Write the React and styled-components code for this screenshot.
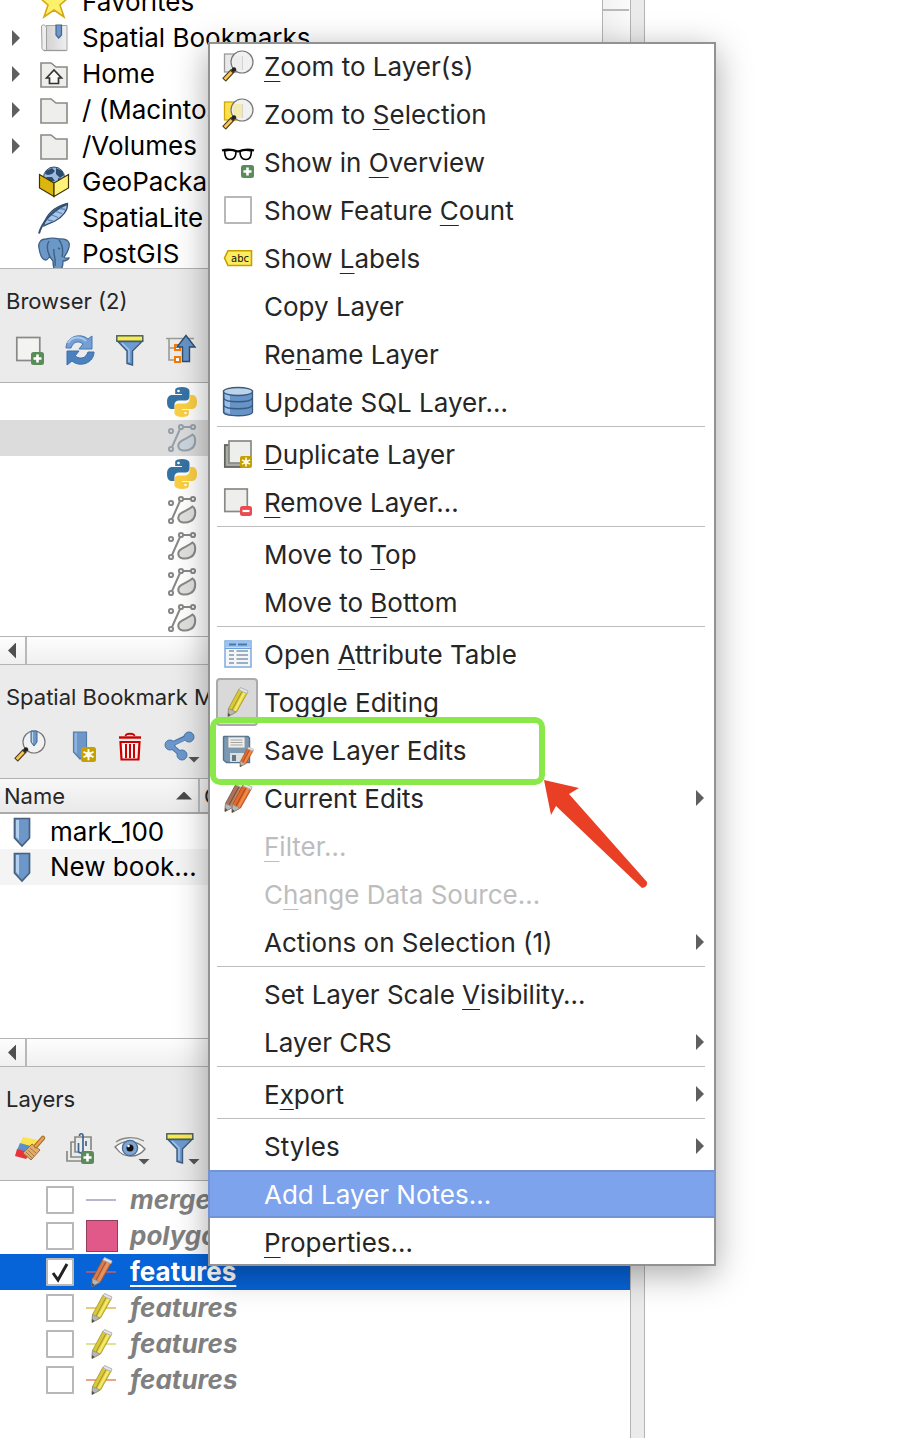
import React from "react";
import styled, { createGlobalStyle, css } from "styled-components";

const GlobalStyle = createGlobalStyle`
  *, *::before, *::after { box-sizing: border-box; }
  body {
    margin: 0;
    background: #ffffff;
    font-family: Inter, "Liberation Sans", sans-serif;
    font-size: 26px;
    line-height: 30px;
    color: #000000;
  }
  button, input, table { font: inherit; color: inherit; }
  ul { list-style: none; margin: 0; padding: 0; }
`;

/* ---------- layout ---------- */

const Window = styled.div`
  position: relative;
  display: flex;
  min-height: 100vh;
  overflow: hidden;
`;

const Dock = styled.aside`
  display: flex;
  flex-direction: column;
  flex: 0 0 631px;
  min-width: 0;
  border-right: 1px solid #b4b4b4;
`;

const Splitter = styled.div`
  flex: 0 0 14px;
  background: #ebebeb;
  border-right: 1px solid #b4b4b4;
`;

const Canvas = styled.main`
  flex: 1;
  background: #ffffff;
`;

/* ---------- browser tree ---------- */

const TreePanel = styled.section`
  display: flex;
  height: 269px;
  border-bottom: 1px solid #b4b4b4;
  overflow: hidden;
`;

const Tree = styled.ul`
  flex: 1;
  margin-top: -16px;
`;

const TreeRow = styled.li`
  display: flex;
  align-items: center;
  height: 36px;
  padding-left: 12px;
  white-space: nowrap;
`;

const Twisty = styled.span`
  width: 8px;
  height: 16px;
  margin-right: 18px;
  background: ${(p) => (p.$shown ? "#5f5f5f" : "transparent")};
  clip-path: polygon(0 0, 100% 50%, 0 100%);
`;

const TreeLabel = styled.span`
  margin-left: 12px;
`;

const VerticalScroll = styled.div`
  width: 28px;
  border-left: 1px solid #b4b4b4;
  background: linear-gradient(90deg, #f2f2f2, #fbfbfb);
`;

const VerticalThumb = styled.div`
  height: 11px;
  margin-right: 1px;
  border-bottom: 2px solid #b8b8b8;
`;

/* ---------- panels ---------- */

const PanelTitle = styled.h2`
  margin: 0;
  padding: 18px 6px 0;
  background: #ebebeb;
  color: #262626;
  font-size: 22px;
  font-weight: 400;
  line-height: 28px;
  white-space: nowrap;
`;

const Toolbar = styled.div`
  display: flex;
  gap: 18px;
  padding: 19px 14px 16px;
  background: #ebebeb;
  border-bottom: 1px solid #b0b0b0;
`;

const ToolButton = styled.button`
  width: 32px;
  height: 32px;
  padding: 0;
  border: 0;
  background: none;
`;

const Svg = styled.svg`
  display: block;
  flex: none;
  overflow: visible;
`;

const ProviderList = styled.ul`
  padding-top: 1px;
`;

const ProviderRow = styled.li`
  display: flex;
  align-items: center;
  height: 36px;
  padding-left: 166px;
  background: ${(p) => (p.$selected ? "#dcdcdc" : "#ffffff")};
`;

const ScrollTrack = styled.div`
  display: flex;
  height: 29px;
  border-top: 1px solid #b4b4b4;
  border-bottom: 1px solid #b4b4b4;
  background: linear-gradient(#fdfdfd, #f0f0f0);
`;

const ScrollButton = styled.button`
  width: 27px;
  padding: 0 0 0 8px;
  border: 0;
  border-right: 2px solid #b8b8b8;
  background: none;

  &::before {
    content: "";
    display: block;
    width: 8px;
    height: 16px;
    background: #4f4f4f;
    clip-path: polygon(100% 0, 0 50%, 100% 100%);
  }
`;

const TableArea = styled.div`
  min-height: 259px;
`;

const BookmarkTable = styled.table`
  width: 100%;
  table-layout: fixed;
  border-collapse: collapse;
  text-align: left;
  white-space: nowrap;
`;

const HeadCell = styled.th`
  width: ${(p) => p.$width || "auto"};
  height: 34px;
  padding: 0 6px 0 4px;
  border-right: 2px solid #bdbdbd;
  border-bottom: 2px solid #ababab;
  background: linear-gradient(#f8f8f8, #e9e9e9);
  color: #262626;
  font-size: 22px;
  font-weight: 400;
`;

const SortLabel = styled.span`
  display: flex;
  align-items: center;
  justify-content: space-between;

  &::after {
    content: "";
    width: 16px;
    height: 8px;
    background: #4a4a4a;
    clip-path: polygon(0 100%, 50% 0, 100% 100%);
  }
`;

const BookmarkRow = styled.tr`
  background: ${(p) => (p.$alt ? "#f4f4f4" : "#ffffff")};
`;

const BookmarkCell = styled.td`
  height: 36px;
  padding: 0;
`;

const BookmarkName = styled.span`
  display: flex;
  align-items: center;
  gap: 12px;
  padding-left: 6px;
`;

/* ---------- layers ---------- */

const LayerList = styled.ul`
  flex: 1;
  padding-top: 1px;
`;

const LayerRow = styled.li`
  background: ${(p) => (p.$selected ? "#0763d8" : "#ffffff")};
  color: ${(p) => (p.$selected ? "#ffffff" : "#808080")};
`;

const LayerLabel = styled.label`
  display: flex;
  align-items: center;
  gap: 12px;
  height: 36px;
  padding-left: 46px;
`;

const Check = styled.input`
  appearance: none;
  flex: none;
  width: 28px;
  height: 28px;
  margin: 0;
  border: 2px solid #b8b8b8;
  border-radius: 1px;
  background: #ffffff;

  &:checked {
    background: #ffffff
      url("data:image/svg+xml,%3Csvg xmlns='http://www.w3.org/2000/svg' viewBox='0 0 24 24'%3E%3Cpath d='M5 13 L10 20 L19 4' fill='none' stroke='%23222' stroke-width='3'/%3E%3C/svg%3E");
  }
`;

const LayerName = styled.span`
  font-weight: 700;
  font-style: ${(p) => (p.$selected ? "normal" : "italic")};
  ${(p) =>
    p.$selected &&
    css`
      text-decoration: underline;
      text-decoration-thickness: 2px;
      text-underline-offset: 4px;
    `}
`;

/* ---------- context menu ---------- */

const Menu = styled.ul`
  position: absolute;
  top: 42px;
  left: 208px;
  width: 508px;
  background: #ffffff;
  color: #262626;
  box-shadow: 0 8px 32px rgba(0, 0, 0, 0.34);

  &::after {
    content: "";
    position: absolute;
    inset: 0;
    border: 2px solid #929292;
    pointer-events: none;
  }
`;

const MenuEntry = styled.li`
  position: relative;
  z-index: ${(p) => (p.$raised ? 1 : "auto")};
`;

const entryStyle = css`
  display: flex;
  align-items: center;
  gap: 6px;
  width: 100%;
  height: 48px;
  padding: 0 12px 0 8px;
  border: 0;
  background: none;
  text-align: left;
  white-space: nowrap;
`;

const MenuButton = styled.button`
  ${entryStyle}
  &:disabled {
    color: #bdbdbd;
  }
  ${(p) =>
    p.$active &&
    css`
      padding: 0 10px 0 6px;
      border: 2px solid #7393d3;
      background: #7ca3ec;
      color: #ffffff;
    `}
`;

const MenuCheckLabel = styled.label`
  ${entryStyle}
`;

const IconSlot = styled.span`
  display: flex;
  align-items: center;
  justify-content: center;
  flex: none;
  width: 42px;
  height: 48px;
  padding-left: 2px;
  ${(p) =>
    p.$pressed &&
    css`
      border: 2px solid #aaaaaa;
      border-radius: 4px;
      background: #d9d9d9;
    `}
`;

const MenuText = styled.span`
  flex: 1;
  padding-top: 2px;
`;

const Mnemonic = styled.span`
  text-decoration: underline;
  text-decoration-thickness: 1px;
  text-underline-offset: 5px;
  text-decoration-skip-ink: none;
`;

const SubmenuArrow = styled.span`
  width: 8px;
  height: 16px;
  background: #5f5f5f;
  clip-path: polygon(0 0, 100% 50%, 0 100%);
`;

const Separator = styled.li`
  height: 4px;
  margin: 0 11px 0 9px;
  border-top: 1px solid #bdbdbd;
`;

const Callout = styled.div`
  position: absolute;
  top: -9px;
  left: 2px;
  width: 335px;
  height: 68px;
  border: 6px solid #8be84b;
  border-radius: 10px;
  pointer-events: none;
`;

const CalloutArrow = styled.svg`
  position: absolute;
  top: 54px;
  left: 335px;
  pointer-events: none;
`;

/* ---------- icons ---------- */

const Icon = ({ children }) => (
  <Svg width="32" height="32" viewBox="0 0 32 32" aria-hidden="true">
    {children}
  </Svg>
);

const PlusBadge = ({ x, y }) => (
  <g transform={`translate(${x} ${y})`}>
    <rect width="13" height="13" rx="2.5" fill="#5a8c5a" />
    <path d="M6.5 2.5V10.5M2.5 6.5H10.5" stroke="#fff" strokeWidth="2.6" />
  </g>
);

const StarBadge = ({ x, y, s = 12 }) => (
  <g transform={`translate(${x} ${y}) scale(${s / 12})`}>
    <rect width="12" height="12" rx="2" fill="#c4a000" />
    <path d="M6 1.5V10.5M2 3.8L10 8.2M10 3.8L2 8.2" stroke="#fff" strokeWidth="1.5" />
    <circle cx="6" cy="6" r="2.2" fill="#fffbe0" />
  </g>
);

const DropMark = () => <path d="M24.500 27H35.500L30 32.500Z" fill="#555" />;

const StarIcon = () => (
  <Icon>
    <path d="M16 2L20 12H30L22 19L26 31L16 24L6 31L10 19L2 12H12Z" fill="#fdf06b" stroke="#d4a814" strokeWidth="1.6" />
  </Icon>
);

const BookIcon = () => (
  <Icon>
    <defs>
      <linearGradient id="page" x1="0" x2="1">
        <stop offset="0" stopColor="#d2d2d2" />
        <stop offset="1" stopColor="#efefef" />
      </linearGradient>
    </defs>
    <path d="M8 3.500H29V28.500H8Z" fill="url(#page)" stroke="#a5a5a5" />
    <path d="M3.500 4C5 2 8 3 8.500 6V26C9 28 8 29 6 28.500C4 28 3.500 26 4 24Z" fill="#eee" stroke="#a0a0a0" />
    <path d="M6 28.500H28" stroke="#999" strokeWidth="1.300" />
    <path d="M18 3H23.500V13L20.700 16L18 13Z" fill="#6d97c9" stroke="#44668f" strokeWidth="1.200" />
  </Icon>
);

const FolderIcon = ({ home }) => (
  <Icon>
    <path d="M3 5H13L18 9H29V29H3Z" fill="#eeeeec" stroke="#888a85" strokeWidth="1.600" />
    {home && (
      <path
        d="M8.500 20L16 12L23.500 20H20.500V25.500H11.500V20Z"
        fill="#f8f8f8"
        stroke="#333"
        strokeWidth="1.700"
      />
    )}
  </Icon>
);

const GeoPackageIcon = () => (
  <Icon>
    <circle cx="16" cy="11.500" r="10.500" fill="#9dbbe0" stroke="#2f4a68" />
    <path d="M8 5L14 2L17 5L14 8L10 9L7 8ZM18 2L24 5L26 9L22 12L18 8ZM8 11L14 11L17 15L12 16ZM20 12L24 13L20 15Z" fill="#2b4b6f" />
    <path d="M1.500 8.500L16 17V30.500L1.500 22Z" fill="#dcb50e" stroke="#3d3200" strokeWidth="1.200" />
    <path d="M30.500 8.500L16 17V30.500L30.500 22Z" fill="#fff278" stroke="#3d3200" strokeWidth="1.200" />
  </Icon>
);

const FeatherIcon = () => (
  <Icon>
    <path d="M6 22C8 14 15 5 29.500 1.500C30 8 25 15 17 19C13 21 9 22 6 24Z" fill="#a9c6ea" stroke="#33506f" strokeWidth="1.300" />
    <path d="M1 31.500C4 21 13 9 29 2" fill="none" stroke="#33506f" strokeWidth="2" />
    <path d="M10 18L15 19M14 13L20 15.500M18 9.500L24 11.500M22 6.500L27 7.500" stroke="#5d86b7" strokeWidth="1.300" />
  </Icon>
);

const ElephantIcon = () => (
  <Icon>
    <path
      d="M8 1C2 1 0 6 1 10C2 17 4 22 8 22C10 22 10 19 12 19L15 23C15 28 16 32 18 32H21C24 32 25 28 25 23C28 23 31 21 31 20C29 20 27 21 26 19C30 14 32 8 31 5C29 0 23 1 21 1C17 0 12 0 8 1Z"
      fill="#6c98c8"
      stroke="#3d6184"
      strokeWidth="1.300"
    />
    <path d="M11 3C8 8 10 15 12 19M21 2C25 7 25 14 24 19M16 11C15 16 18 19 17 28M20 10L22 11" fill="none" stroke="#3d6184" strokeWidth="1.400" />
  </Icon>
);

const AddLayerIcon = () => (
  <Icon>
    <rect x="2.800" y="3.500" width="23" height="23" fill="#f3f3f1" stroke="#888a85" strokeWidth="1.700" />
    <PlusBadge x={17} y={18} />
  </Icon>
);

const RefreshIcon = () => (
  <Icon>
    <path d="M2 14C2 3 16 -2 24 5L28 2V15H15L19 10C14 6 9 8 7 14Z" fill="#739fd2" stroke="#4779b3" strokeWidth="1" />
    <path d="M4 9C8 2 17 2 22 7" fill="none" stroke="#abc8ea" strokeWidth="2" />
    <path d="M30 18C30 29 16 34 8 27L3 31V17H15L11 22C17 26 22 24 24 18Z" fill="#4c81c0" stroke="#3a6eaa" strokeWidth="1" />
  </Icon>
);

const FunnelIcon = ({ drop }) => (
  <Icon>
    <path d="M4 7.500L13 17V29.500L18.500 31V17L28 7.500Z" fill="#6d9bd0" stroke="#3c5d80" strokeWidth="1.400" />
    <path d="M8 9L15 16V28" fill="none" stroke="#a5c6ea" strokeWidth="1.500" />
    <rect x="2.800" y="1.800" width="26" height="5.400" fill="#fce94f" stroke="#3c5d5d" strokeWidth="1.400" />
    {drop && <DropMark />}
  </Icon>
);

const CollapseIcon = () => (
  <Icon>
    <path d="M2 4.500H30M5 5V26H12M5 14H12" fill="none" stroke="#9a9c98" strokeWidth="1.600" />
    <rect x="11" y="11" width="5" height="5" fill="#fff" stroke="#f57900" strokeWidth="2" />
    <rect x="11" y="23" width="5" height="5" fill="#fff" stroke="#f57900" strokeWidth="2" />
    <path d="M22 1.500L31 13H25.500V27.500H18.500V13H13Z" fill="#6795ca" stroke="#2f4e70" strokeWidth="1.400" />
  </Icon>
);

const Snake = ({ fill }) => (
  <>
    <path
      d="M15.800 1C9 1 9.200 4 9.200 4V8H16V9H6S1 8.500 1 16S5.500 23 5.500 23H8.500V19S8.300 14.500 13 14.500H19.500S23.500 14.600 23.500 10.500V5.500S24.200 1 15.800 1Z"
      fill={fill}
    />
    <circle cx="12.500" cy="5" r="1.300" fill="#fff" />
  </>
);

const PythonIcon = () => (
  <Icon>
    <Snake fill="#3673a5" />
    <g transform="rotate(180 16 16)">
      <Snake fill="#fbd043" />
    </g>
  </Icon>
);

const GeometryIcon = ({ tinted }) => {
  const line = tinted ? "#96a1ab" : "#888a87";
  return (
    <Icon>
      <g fill="none" stroke={line} strokeWidth="2">
        <path d="M6 25L14 7M17 5H25" />
        <circle cx="5" cy="9" r="2.100" />
        <circle cx="15" cy="5" r="2.100" />
        <circle cx="27" cy="5" r="2.100" />
        <circle cx="5" cy="27" r="2.100" />
      </g>
      <path
        d="M26.500 12.500C29 14 29.500 18 29 21C28 27 22 29 17 28.500C12 28 11 23 14 20C17 17.500 22 16 26.500 12.500Z"
        fill={tinted ? "#cdd6e0" : "#e1e1df"}
        stroke={line}
        strokeWidth="2"
      />
    </Icon>
  );
};

const Lens = ({ children }) => (
  <>
    <circle cx="20" cy="12" r="11" fill="#f1f1f1" stroke="#777" strokeWidth="1.200" />
    {children}
    <path d="M2 30L11 20.500" stroke="#4b3a1a" strokeWidth="5" />
    <path d="M2.700 29.200L9.500 22" stroke="#f6c65b" strokeWidth="2.800" />
    <circle cx="12" cy="19.500" r="2.200" fill="#222" />
  </>
);

const ZoomBookmarkIcon = () => (
  <Icon>
    <Lens>
      <path d="M17 1H23V12L20 16L17 12Z" fill="#6d97c9" stroke="#44668f" />
      <path d="M18.500 2V13" stroke="#b9d2ee" strokeWidth="1.200" />
    </Lens>
  </Icon>
);

const ZoomLayerIcon = ({ color, stroke }) => (
  <Icon>
    <rect x="2.500" y="4" width="18" height="18" fill={color} stroke={stroke} strokeWidth="1.300" />
    <Lens>
      <path d="M13 6H20.500V20H14C10 16 10 9 13 6Z" fill={color} opacity="0.400" />
      <path d="M20.500 6V20" stroke="#d4d4cc" />
    </Lens>
  </Icon>
);

const AddBookmarkIcon = () => (
  <Icon>
    <path d="M9.500 2H22.500V22L16 29L9.500 22Z" fill="#6d97c9" stroke="#557ba7" strokeWidth="1.200" />
    <path d="M10.500 3H13V24L10.500 21.500Z" fill="#90b4de" />
    <StarBadge x={17} y={17} s={15} />
  </Icon>
);

const TrashIcon = () => (
  <Icon>
    <path d="M5 7.500H27" stroke="#cc0000" strokeWidth="2.400" />
    <path d="M11.500 6C12 3 20 3 20.500 6" fill="none" stroke="#cc0000" strokeWidth="1.800" />
    <path d="M6.500 12H25.500L24.500 29.500H7.500Z" fill="#fff3f3" stroke="#cc0000" strokeWidth="2.200" />
    <path d="M12 14V28M16 14V28M20 14V28" stroke="#cc0000" strokeWidth="2" />
  </Icon>
);

const ShareIcon = () => (
  <Icon>
    <path d="M25 6L6 15L18 25" fill="none" stroke="#4a76ab" strokeWidth="5" />
    <g fill="#6c98cc" stroke="#4a76ab">
      <circle cx="25" cy="7" r="5" />
      <circle cx="6" cy="15" r="5" />
      <circle cx="18" cy="25" r="5" />
    </g>
    <path d="M25 7L6 15L18 25" fill="none" stroke="#6c98cc" strokeWidth="3.400" />
    <DropMark />
  </Icon>
);

const BookmarkIcon = () => (
  <Icon>
    <path d="M8.500 2.500H23.500V22L16 30L8.500 22Z" fill="#6d97c9" stroke="#46617f" strokeWidth="1.700" />
    <path d="M10 4H13V24L10 21Z" fill="#b3d0f0" />
  </Icon>
);

const BrushIcon = () => (
  <Icon>
    <path d="M9 5L24 8L20 17L6 12Z" fill="#fbe34c" />
    <path d="M6 11L20 15L16 22L3 18Z" fill="#5f8fc8" />
    <path d="M3 17L17 21L12 27L1 24Z" fill="#e8333a" />
    <path d="M18 12L9 21L17 28L26 18Z" fill="#e3ad6e" stroke="#a06d2f" />
    <path d="M12 20L18 26M14 18L20 24M16 16L22 21" stroke="#a9783c" strokeWidth="1" />
    <path d="M22 14L29 6" stroke="#a06d2f" strokeWidth="4.500" strokeLinecap="round" />
    <path d="M22 14L29 6" stroke="#e8a04a" strokeWidth="2.600" strokeLinecap="round" />
  </Icon>
);

const AddGroupIcon = () => (
  <Icon>
    <g fill="none" stroke="#888a85" strokeWidth="1.700">
      <path d="M3 19V29H17" />
      <path d="M11 10H7V25H19" />
      <path d="M15 20H11V5H27V18" />
    </g>
    <path d="M14.500 11V19C14.500 21.500 19 21.500 19 19V4C19 1 15.500 1 15.500 4M22 9V14" fill="none" stroke="#40648e" strokeWidth="1.700" />
    <PlusBadge x={17} y={19} />
  </Icon>
);

const EyeIcon = () => (
  <Icon>
    <path d="M2 10C9 5 20 4 30 9" fill="none" stroke="#888a85" strokeWidth="1.300" />
    <path d="M1 15C8 8 23 7 31 17C23 27 9 26 3 17Z" fill="#fafafa" stroke="#777" strokeWidth="1.300" />
    <circle cx="16" cy="16" r="7.600" fill="#7fa5d3" stroke="#456b98" strokeWidth="1.300" />
    <circle cx="16" cy="16" r="3.500" fill="#111" />
    <circle cx="14.500" cy="14" r="1.300" fill="#fff" />
    <DropMark />
  </Icon>
);

const Pencil = ({ fill, light, dark }) => (
  <>
    <path d="M6.500 22.500L17 3L25.500 6.500L14.500 26L6 30.500Z" fill={fill} stroke={dark} strokeWidth="0.800" />
    <path d="M10 24L20 5.500" stroke={dark} strokeWidth="1" />
    <path d="M12.500 25L22.500 6.500" stroke={light} strokeWidth="2.600" />
    <path d="M6.500 22.500L14 26L6 30.500Z" fill="#b7b7b5" stroke="#8d8d8b" strokeWidth="0.800" />
    <path d="M6.300 27L8.500 29L6 30.500Z" fill="#444" />
    <path d="M17 4L18.500 1.500L26 5L25 7.500Z" fill="#e6e6e6" stroke="#b2b2b2" />
  </>
);

const yellow = { fill: "#d8c73a", light: "#f5e96c", dark: "#a39426" };
const orange = { fill: "#e06a2b", light: "#f08a4b", dark: "#a74516" };
const brown = { fill: "#a9745a", light: "#c38e72", dark: "#7a4a35" };
const copper = { fill: "#d77b4c", light: "#e6935f", dark: "#9c5230" };

const LayerPencilIcon = ({ line, tone }) => (
  <Icon>
    <path d="M0 16H30" stroke={line} strokeWidth="1.800" />
    <Pencil {...tone} />
  </Icon>
);

const LineSwatch = () => (
  <Icon>
    <path d="M0 16H30" stroke="#b3aecb" strokeWidth="1.800" />
  </Icon>
);

const PolygonSwatch = () => (
  <Icon>
    <rect x="0.500" y="0.500" width="31" height="31" fill="#e15989" stroke="#8f3f5b" />
  </Icon>
);

const GlassesIcon = () => (
  <Icon>
    <g transform="translate(0 1)">
      <path d="M0 3.500C5 1.800 11 2.500 16 4.500C21 2.500 27 1.800 32 3.500" fill="none" stroke="#000" strokeWidth="2" />
      <path d="M2.500 4C6 3 11 3 14 4.500C14 10 12 12.500 8 12.500C4 12.500 3 10 2.500 4Z" fill="#fff" stroke="#000" strokeWidth="1.700" />
      <path d="M29.500 4C26 3 21 3 18 4.500C18 10 20 12.500 24 12.500C28 12.500 29 10 29.500 4Z" fill="#fff" stroke="#000" strokeWidth="1.700" />
    </g>
    <PlusBadge x={19} y={19} />
  </Icon>
);

const LabelIcon = () => (
  <Icon>
    <path d="M2.500 16L6 8.700H29.500V23.500H6Z" fill="#fcec5e" stroke="#c4a000" strokeWidth="1.600" />
    <text x="9" y="20" fontFamily="DejaVu Sans, sans-serif" fontSize="10" fill="#111">
      abc
    </text>
  </Icon>
);

const DatabaseIcon = () => (
  <Icon>
    <path d="M1.500 5V26C1.500 31 30.500 31 30.500 26V5Z" fill="#6693c8" stroke="#3b5a7c" strokeWidth="1.300" />
    <path d="M3 8V26L8 28V9Z" fill="#9dbfe6" />
    <ellipse cx="16" cy="5.500" rx="14.500" ry="4" fill="#bdd3ea" stroke="#3b5a7c" strokeWidth="1.300" />
    <path d="M1.500 12C3 17 29 17 30.500 12M1.500 19C3 24 29 24 30.500 19" fill="none" stroke="#3b5a7c" strokeWidth="1.300" />
  </Icon>
);

const DuplicateIcon = () => (
  <Icon>
    <rect x="2.800" y="7" width="19" height="22" fill="#a9aba6" stroke="#5e605c" strokeWidth="1.700" />
    <rect x="7" y="3" width="22" height="22" fill="#eeeeec" stroke="#888a85" strokeWidth="1.700" />
    <StarBadge x={18} y={18} />
  </Icon>
);

const RemoveIcon = () => (
  <Icon>
    <rect x="2.800" y="3" width="22.500" height="22.500" fill="#eeeeec" stroke="#888a85" strokeWidth="1.700" />
    <rect x="18" y="20" width="12" height="10" rx="2.500" fill="#ea4b51" />
    <path d="M20.500 25H27.500" stroke="#fff" strokeWidth="2.200" />
  </Icon>
);

const TableIcon = () => (
  <Icon>
    <rect x="3" y="3" width="26" height="26" fill="#f3f5f7" stroke="#84b1e2" strokeWidth="1.600" />
    <rect x="3.500" y="3.500" width="25" height="6" fill="#9cc3ee" />
    <path d="M7 6.500H14M16 6.500H25" stroke="#4a78ad" strokeWidth="2" />
    <path d="M7 13H12M14.500 13H26M7 17H12M14.500 17H26M7 21H12M14.500 21H26M7 25H12M14.500 25H26" stroke="#8296ad" strokeWidth="1.500" />
    <path d="M3 10.500H29" stroke="#6c9fd6" />
  </Icon>
);

const PencilIcon = () => (
  <Icon>
    <Pencil {...yellow} />
  </Icon>
);

const SaveIcon = () => (
  <Icon>
    <path d="M2 2.500H26L27.500 4V28.500H4.500L1.500 26V3Z" fill="#7c99b3" stroke="#56718b" strokeWidth="1.400" />
    <rect x="6" y="3" width="17" height="11" fill="#eeeeec" stroke="#8a8f93" strokeWidth="0.800" />
    <path d="M8.500 6H20.500M8.500 8.500H20.500M8.500 11H20.500" stroke="#a2a4a0" strokeWidth="1.100" />
    <rect x="8" y="19" width="14" height="9" fill="#dedfdd" />
    <rect x="10" y="21" width="4" height="6" fill="#5d7891" />
    <g transform="translate(14 12) scale(0.680)">
      <Pencil {...orange} />
    </g>
  </Icon>
);

const CurrentEditsIcon = () => (
  <Icon>
    <g transform="translate(-3 -1)">
      <Pencil {...brown} />
    </g>
    <g transform="translate(4 0)">
      <Pencil {...orange} />
    </g>
  </Icon>
);

/* ---------- data ---------- */

const treeItems = [
  { label: "Favorites", icon: <StarIcon /> },
  { label: "Spatial Bookmarks", icon: <BookIcon />, open: true },
  { label: "Home", icon: <FolderIcon home />, open: true },
  { label: "/ (Macintosh", icon: <FolderIcon />, open: true },
  { label: "/Volumes", icon: <FolderIcon />, open: true },
  { label: "GeoPackage", icon: <GeoPackageIcon /> },
  { label: "SpatiaLite", icon: <FeatherIcon /> },
  { label: "PostGIS", icon: <ElephantIcon /> },
];

const layers = [
  { name: "merged", icon: <LineSwatch /> },
  { name: "polygon", icon: <PolygonSwatch /> },
  { name: "features", icon: <LayerPencilIcon line="#a2607f" tone={copper} />, selected: true },
  { name: "features", icon: <LayerPencilIcon line="#eac26e" tone={yellow} /> },
  { name: "features", icon: <LayerPencilIcon line="#dbe08a" tone={yellow} /> },
  { name: "features", icon: <LayerPencilIcon line="#e89a7c" tone={yellow} /> },
];

/* An underscore precedes the keyboard mnemonic of each label. */
const menuItems = [
  { label: "_Zoom to Layer(s)", icon: <ZoomLayerIcon color="#e9e9e9" stroke="#9a9a9a" /> },
  { label: "Zoom to _Selection", icon: <ZoomLayerIcon color="#fbe14a" stroke="#cfa90f" /> },
  { label: "Show in _Overview", icon: <GlassesIcon /> },
  { label: "Show Feature _Count", checkbox: true },
  { label: "Show _Labels", icon: <LabelIcon /> },
  { label: "Copy Layer" },
  { label: "Re_name Layer" },
  { label: "Update SQL Layer…", icon: <DatabaseIcon /> },
  null,
  { label: "_Duplicate Layer", icon: <DuplicateIcon /> },
  { label: "_Remove Layer…", icon: <RemoveIcon /> },
  null,
  { label: "Move to _Top" },
  { label: "Move to _Bottom" },
  null,
  { label: "Open _Attribute Table", icon: <TableIcon /> },
  { label: "Toggle _Editing", icon: <PencilIcon />, pressed: true },
  { label: "Save Layer Edits", icon: <SaveIcon />, callout: true },
  { label: "Current Edits", icon: <CurrentEditsIcon />, submenu: true },
  { label: "_Filter…", disabled: true },
  { label: "C_hange Data Source…", disabled: true },
  { label: "Actions on Selection (1)", submenu: true },
  null,
  { label: "Set Layer Scale _Visibility…" },
  { label: "Layer CRS", submenu: true },
  null,
  { label: "E_xport", submenu: true },
  null,
  { label: "Styles", submenu: true },
  { label: "Add Layer Notes…", active: true },
  { label: "_Properties…" },
];

const Label = ({ text }) => {
  const at = text.indexOf("_");
  if (at < 0) return <MenuText>{text}</MenuText>;
  return (
    <MenuText>
      {text.slice(0, at)}
      <Mnemonic>{text[at + 1]}</Mnemonic>
      {text.slice(at + 2)}
    </MenuText>
  );
};

const MenuItem = ({ item }) => (
  <MenuEntry $raised={item.active || item.callout}>
    {item.checkbox ? (
      <MenuCheckLabel>
        <IconSlot>
          <Check type="checkbox" />
        </IconSlot>
        <Label text={item.label} />
      </MenuCheckLabel>
    ) : (
      <MenuButton type="button" disabled={item.disabled} $active={item.active} aria-pressed={item.pressed}>
        <IconSlot $pressed={item.pressed}>{item.icon}</IconSlot>
        <Label text={item.label} />
        {item.submenu && <SubmenuArrow />}
      </MenuButton>
    )}
    {item.callout && (
      <>
        <Callout />
        <CalloutArrow width="106" height="110" viewBox="0 0 106 110" aria-hidden="true">
          <path d="M1 0L36 8L26 14L104 102Q105 107 99 108L13 26L8 35Z" fill="#e94025" />
        </CalloutArrow>
      </>
    )}
  </MenuEntry>
);

const PanelHead = ({ title, tools }) => (
  <>
    <PanelTitle>{title}</PanelTitle>
    <Toolbar>
      {tools.map(([name, icon]) => (
        <ToolButton key={name} type="button" aria-label={name}>
          {icon}
        </ToolButton>
      ))}
    </Toolbar>
  </>
);

const HorizontalScroll = () => (
  <ScrollTrack>
    <ScrollButton type="button" aria-label="Scroll left" />
  </ScrollTrack>
);

export default function App() {
  return (
    <>
      <GlobalStyle />
      <Window>
        <Dock>
          <TreePanel>
            <Tree>
              {treeItems.map((t) => (
                <TreeRow key={t.label}>
                  <Twisty $shown={t.open} />
                  {t.icon}
                  <TreeLabel>{t.label}</TreeLabel>
                </TreeRow>
              ))}
            </Tree>
            <VerticalScroll>
              <VerticalThumb />
            </VerticalScroll>
          </TreePanel>

          <PanelHead
            title="Browser (2)"
            tools={[
              ["Add layer", <AddLayerIcon />],
              ["Refresh", <RefreshIcon />],
              ["Filter browser", <FunnelIcon />],
              ["Collapse all", <CollapseIcon />],
            ]}
          />
          <ProviderList>
            {["python", "tinted", "python", "plain", "plain", "plain", "plain"].map((kind, i) => (
              <ProviderRow key={i} $selected={kind === "tinted"}>
                {kind === "python" ? <PythonIcon /> : <GeometryIcon tinted={kind === "tinted"} />}
              </ProviderRow>
            ))}
          </ProviderList>
          <HorizontalScroll />

          <PanelHead
            title="Spatial Bookmark M"
            tools={[
              ["Zoom to bookmark", <ZoomBookmarkIcon />],
              ["Add bookmark", <AddBookmarkIcon />],
              ["Delete bookmark", <TrashIcon />],
              ["Import or export", <ShareIcon />],
            ]}
          />
          <TableArea>
            <BookmarkTable>
              <thead>
                <tr>
                  <HeadCell $width="199px">
                    <SortLabel>Name</SortLabel>
                  </HeadCell>
                  <HeadCell>Group</HeadCell>
                </tr>
              </thead>
              <tbody>
                {["mark_100", "New book…"].map((name, i) => (
                  <BookmarkRow key={name} $alt={i === 1}>
                    <BookmarkCell>
                      <BookmarkName>
                        <BookmarkIcon />
                        {name}
                      </BookmarkName>
                    </BookmarkCell>
                    <BookmarkCell />
                  </BookmarkRow>
                ))}
              </tbody>
            </BookmarkTable>
          </TableArea>
          <HorizontalScroll />

          <PanelHead
            title="Layers"
            tools={[
              ["Layer styling", <BrushIcon />],
              ["Add group", <AddGroupIcon />],
              ["Manage map themes", <EyeIcon />],
              ["Filter legend", <FunnelIcon drop />],
            ]}
          />
          <LayerList>
            {layers.map((l, i) => (
              <LayerRow key={i} $selected={l.selected}>
                <LayerLabel>
                  <Check type="checkbox" defaultChecked={l.selected} />
                  {l.icon}
                  <LayerName $selected={l.selected}>{l.name}</LayerName>
                </LayerLabel>
              </LayerRow>
            ))}
          </LayerList>
        </Dock>
        <Splitter />
        <Canvas />

        <Menu>
          {menuItems.map((item, i) => (item ? <MenuItem key={i} item={item} /> : <Separator key={i} role="separator" />))}
        </Menu>
      </Window>
    </>
  );
}
